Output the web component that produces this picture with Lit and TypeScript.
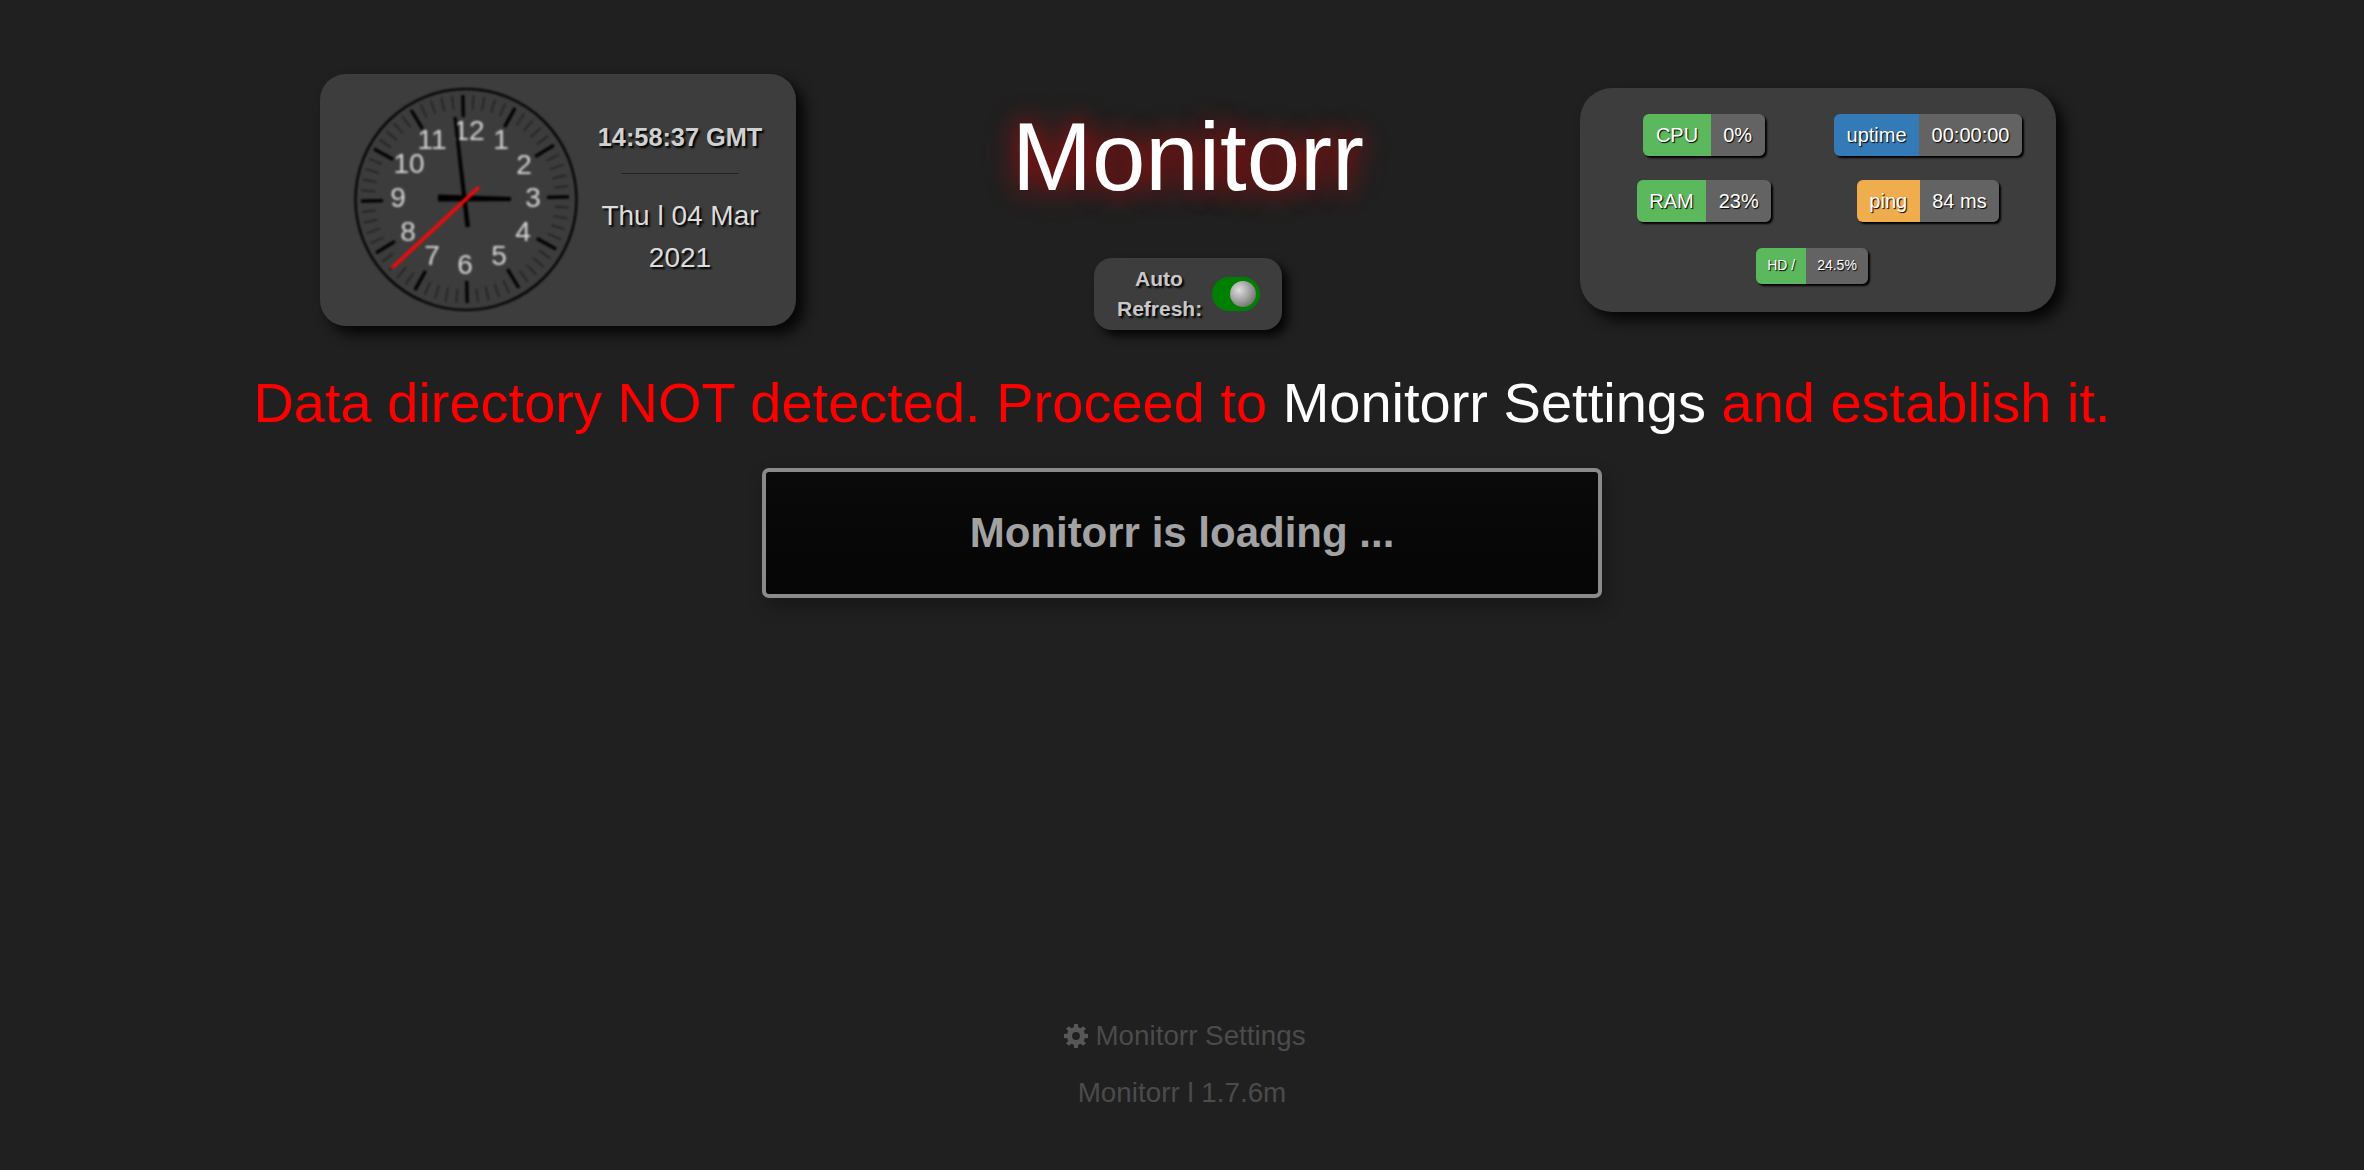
import { LitElement, html, css, svg } from "lit";
import { customElement } from "lit/decorators.js";

const NUMS: [string, number, number][] = [
  ["12", 115, 42], ["1", 147, 51], ["2", 170, 76], ["3", 179, 109], ["4", 169, 143], ["5", 145, 167],
  ["6", 111, 176], ["7", 78, 167], ["8", 54, 143], ["9", 44, 109], ["10", 55, 75], ["11", 78, 51],
];

function gearPath(): string {
  const cx = 12, cy = 12, teeth = 8, ro = 12.2, ri = 9, hole = 3.9;
  const pts: string[] = [];
  for (let i = 0; i < teeth; i++) {
    const a = (i * 2 * Math.PI) / teeth - Math.PI / 2;
    const s = Math.PI / teeth;
    const p = (r: number, t: number) => `${(cx + r * Math.cos(t)).toFixed(2)} ${(cy + r * Math.sin(t)).toFixed(2)}`;
    pts.push(`${i === 0 ? "M" : "L"}${p(ri, a - s * 0.62)}`, `L${p(ro, a - s * 0.4)}`, `L${p(ro, a + s * 0.4)}`, `L${p(ri, a + s * 0.62)}`);
  }
  return `${pts.join(" ")} Z M${cx + hole} ${cy} A${hole} ${hole} 0 1 0 ${cx - hole} ${cy} A${hole} ${hole} 0 1 0 ${cx + hole} ${cy} Z`;
}

@customElement("app-root")
export class AppRoot extends LitElement {
  static styles = css`
    :host {
      display: flex;
      flex-direction: column;
      min-height: 100vh;
      background: #202020;
      font-family: "Liberation Sans", Arial, sans-serif;
    }
    .top {
      display: grid;
      grid-template-columns: repeat(3, 630px);
      margin: 74px 0 0 243px;
      height: 256px;
      align-items: start;
      justify-items: center;
    }
    .card {
      background: #3d3d3d;
      width: 476px;
      box-sizing: border-box;
      box-shadow: 8px 8px 14px rgba(0, 0, 0, 0.85);
    }
    .clock-card {
      height: 252px;
      border-radius: 26px;
      padding: 14px 14px 14px 34px;
      display: flex;
      align-items: center;
    }
    .clock {
      width: 224px;
      height: 224px;
      flex: none;
      filter: blur(0.8px);
    }
    .clock text {
      font: 28px "Liberation Sans", Arial, sans-serif;
      fill: #d4d4d4;
      text-anchor: middle;
    }
    .info {
      flex: 1;
      text-align: center;
      text-shadow: 2px 2px 2px #000;
    }
    .time {
      font-size: 25.3px;
      font-weight: 700;
      line-height: 30px;
      color: #d0d0d0;
    }
    .rule {
      width: 118px;
      height: 1px;
      margin: 21px auto;
      background: #222;
    }
    .date {
      font-size: 28px;
      line-height: 42px;
      color: #dcdcdc;
    }
    .center {
      display: flex;
      flex-direction: column;
      align-items: center;
    }
    h1 {
      margin: 28px 0 0;
      font-size: 96px;
      font-weight: 400;
      line-height: 110px;
      color: #fff;
      text-shadow: 0 0 24px rgba(255, 0, 0, 0.55), 0 0 36px rgba(255, 0, 0, 0.3);
    }
    .refresh {
      margin-top: 46px;
      width: 188px;
      height: 72px;
      box-sizing: border-box;
      padding: 6px 22px 6px 23px;
      border-radius: 18px;
      background: #3d3d3d;
      box-shadow: 6px 6px 10px rgba(0, 0, 0, 0.85);
      display: flex;
      align-items: center;
      gap: 11px;
    }
    .refresh-label {
      width: 84px;
      flex: none;
      text-align: center;
      font-size: 21px;
      font-weight: 700;
      line-height: 30px;
      color: #c8c8c8;
      text-shadow: 2px 2px 2px #000;
    }
    .switch {
      width: 48px;
      height: 34px;
      flex: none;
      border-radius: 17px;
      background: #008000;
      display: flex;
      align-items: center;
      justify-content: flex-end;
      padding-right: 4px;
      box-sizing: border-box;
    }
    .knob {
      width: 26px;
      height: 26px;
      border-radius: 50%;
      background: radial-gradient(circle at 35% 35%, #dedede 0%, #9a9a9a 50%, #505050 100%);
    }
    .stats-card {
      height: 224px;
      margin-top: 14px;
      border-radius: 32px;
      padding: 26px 16px 0 12px;
      display: grid;
      grid-template-columns: 224px 224px;
      grid-template-rows: 42px 42px 36px;
      row-gap: 24px;
      justify-items: center;
    }
    .hd-row {
      grid-column: 1 / 3;
      margin: 2px 8px 0 0;
    }
    .badge {
      display: inline-flex;
      height: 42px;
      font-size: 20px;
      line-height: 42px;
      color: #fff;
      border-radius: 6px;
      overflow: hidden;
      text-shadow: 1px 1px 1px #000;
      box-shadow: 2px 2px 2px #000;
    }
    .badge span {
      padding: 0 12.5px;
      white-space: nowrap;
    }
    .badge .val {
      background: #636363;
    }
    .green { background: #5cb85c; }
    .blue { background: #337ab7; }
    .orange { background: #f0ad4e; }
    .badge.small {
      height: 36px;
      line-height: 34px;
      font-size: 14px;
    }
    .badge.small span {
      padding: 0 11px;
    }
    .message {
      margin: 38px 0 0;
      text-align: center;
      font-size: 56px;
      line-height: 70px;
      color: #f00;
    }
    .message .link {
      color: #fff;
    }
    .loading {
      margin: 30px auto 0;
      width: 840px;
      height: 130px;
      box-sizing: border-box;
      border: 4px solid #8a8a8a;
      border-radius: 7px;
      background: linear-gradient(#0a0a0a, #050505);
      box-shadow: 4px 8px 18px rgba(0, 0, 0, 0.3);
      color: #a2a2a2;
      font-size: 42px;
      font-weight: 700;
      display: flex;
      align-items: center;
      justify-content: center;
    }
    footer {
      margin-top: auto;
      padding-bottom: 49px;
      text-align: center;
      font-size: 27.8px;
      line-height: 56px;
      color: #4b4b4b;
    }
    .settings {
      display: flex;
      align-items: center;
      justify-content: center;
      gap: 7px;
      margin-left: 6px;
      margin-bottom: 1px;
    }
    .settings svg {
      width: 24px;
      height: 24px;
      fill: #575757;
    }
  `;

  private ticks() {
    const out = [];
    for (let i = 0; i < 60; i++) {
      const major = i % 5 === 0;
      out.push(svg`<line x1="0" y1="-104" x2="0" y2=${major ? -82 : -90}
        stroke=${major ? "#000" : "#1e1e1e"} stroke-width=${major ? 3.2 : 1.4}
        transform="rotate(${i * 6})" />`);
    }
    return out;
  }

  private clock() {
    return html`<svg class="clock" viewBox="0 0 224 224" aria-label="clock">
      <circle cx="112" cy="111.5" r="110.5" fill="#3c3c3c" stroke="#000" stroke-width="2.2" />
      <g transform="translate(111 111) rotate(-1.2)">${this.ticks()}</g>
      ${NUMS.map(([n, x, y]) => svg`<text x=${x} y=${y + 10}>${n}</text>`)}
      <polygon points="84,106.5 84,113.5 157,113 157,109" fill="#000" />
      <polygon points="99.5,29 102.5,29 116,139 111.5,139" fill="#000" />
      <line x1="38" y1="180" x2="125" y2="99" stroke="#f40a0a" stroke-width="3.6" />
    </svg>`;
  }

  private badge(label: string, value: string, cls: string, small = false) {
    return html`<div class="badge ${small ? "small" : ""}"><span class=${cls}>${label}</span><span class="val">${value}</span></div>`;
  }

  render() {
    return html`
      <div class="top">
        <div class="card clock-card">
          ${this.clock()}
          <div class="info">
            <div class="time">14:58:37 GMT</div>
            <div class="rule"></div>
            <div class="date">Thu l 04 Mar<br />2021</div>
          </div>
        </div>
        <div class="center">
          <h1>Monitorr</h1>
          <div class="refresh">
            <div class="refresh-label">Auto Refresh:</div>
            <div class="switch"><div class="knob"></div></div>
          </div>
        </div>
        <div class="card stats-card">
          ${this.badge("CPU", "0%", "green")}
          ${this.badge("uptime", "00:00:00", "blue")}
          ${this.badge("RAM", "23%", "green")}
          ${this.badge("ping", "84 ms", "orange")}
          <div class="hd-row">${this.badge("HD /", "24.5%", "green", true)}</div>
        </div>
      </div>
      <p class="message">Data directory NOT detected. Proceed to <span class="link">Monitorr Settings</span> and establish it.</p>
      <div class="loading">Monitorr is loading ...</div>
      <footer>
        <div class="settings">
          <svg viewBox="0 0 24 24"><path fill-rule="evenodd" d=${gearPath()} /></svg>
          <span>Monitorr Settings</span>
        </div>
        <div>Monitorr l 1.7.6m</div>
      </footer>
    `;
  }
}
